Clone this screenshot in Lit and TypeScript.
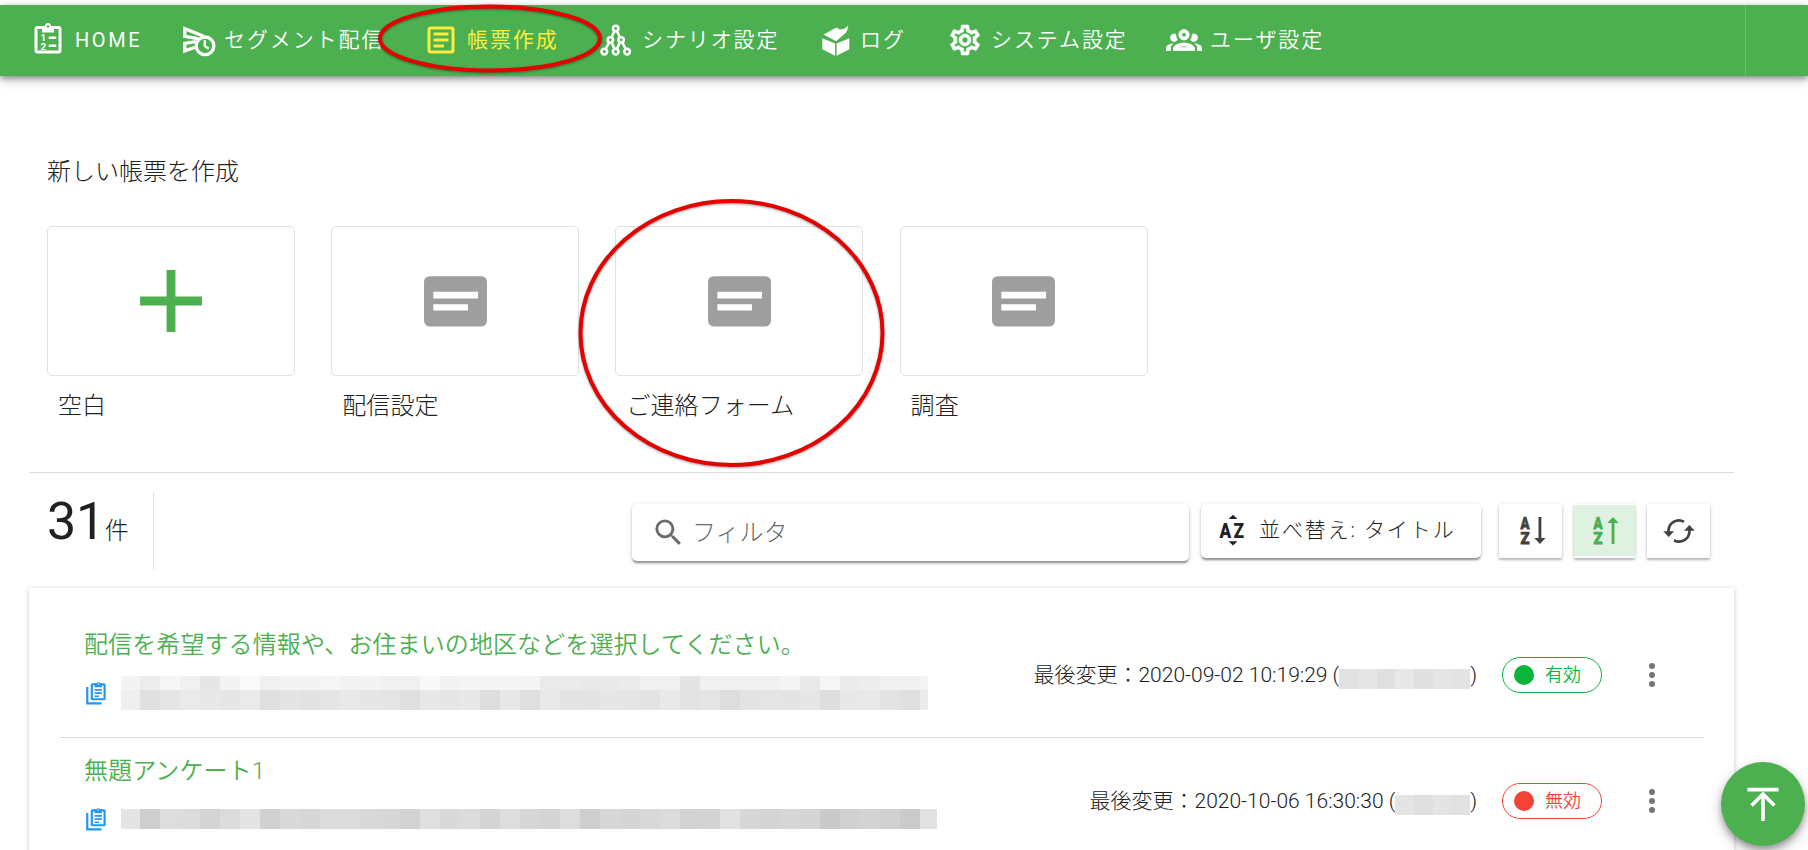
import { LitElement, html, css, svg } from "lit";
import { customElement, property } from "lit/decorators.js";

const ICONS: Record<string, unknown> = {
  home: svg`<rect x="4" y="3.700" width="16" height="16.300" rx="1" fill="none" stroke="currentColor" stroke-width="2"/><path fill="currentColor" d="M8 2.700h2a2 2 0 0 1 4 0h2V7H8z"/><circle cx="12" cy="3" r=".8" fill="#4caf50"/><path stroke="currentColor" stroke-width="1.600" d="M12.500 10.500h5M12.500 15.800h5"/><text class="digit" x="7" y="12.600">1</text><text class="digit" x="7" y="18.400">2</text>`,
  send: svg`<g fill="none" stroke="currentColor" stroke-width="2.200"><path d="M12 11.100L3.200 9.500V4.400L15.500 9.300M10.500 13.100L3.200 14.200v5L10 16.800"/><circle cx="16.700" cy="15.900" r="5.900"/><path stroke-width="1.600" d="M16.500 12.200v3.800l2.700 1.900"/></g>`,
  form: svg`<g fill="none" stroke="currentColor" stroke-width="2"><rect x="4" y="4" width="16" height="16" rx="1"/><path d="M7 8h10M7 12h10M7 16h7"/></g>`,
  scenario: svg`<g fill="none" stroke="currentColor" stroke-width="1.700"><circle cx="11.800" cy="4.300" r="1.800"/><circle cx="8.200" cy="11.900" r="1.800"/><circle cx="15.400" cy="11.900" r="1.800"/><circle cx="4.200" cy="19.700" r="1.900"/><circle cx="11.800" cy="19.700" r="1.900"/><circle cx="19.400" cy="19.700" r="1.900"/><path d="M11 6l-2.100 4.300M12.600 6l2.100 4.300M7.400 13.600l-2.300 4.400M9 13.600l2.100 4.400M14.600 13.600l-2.100 4.400M16.200 13.600l2.300 4.400"/></g>`,
  log: svg`<path fill="currentColor" d="M4.200 10.900l8.500 3.400v8.200l-8.500-4.300zM22.200 10.900l-8.500 3.400v8.200l8.500-4.300zM5 8.300l8.600-4.600 2.300 1.300c2.300 0 4.100-.8 5.600-2.900 0 2.600-.9 4.800-3 6.200l-5 4.600z"/>`,
  gear: svg`<path fill="currentColor" stroke="currentColor" stroke-width=".4" d="M12,8A4,4 0 0,1 16,12A4,4 0 0,1 12,16A4,4 0 0,1 8,12A4,4 0 0,1 12,8M12,10A2,2 0 0,0 10,12A2,2 0 0,0 12,14A2,2 0 0,0 14,12A2,2 0 0,0 12,10M10,22C9.75,22 9.54,21.82 9.5,21.58L9.13,18.93C8.5,18.68 7.96,18.34 7.44,17.94L4.95,18.95C4.73,19.03 4.46,18.95 4.34,18.73L2.34,15.27C2.21,15.05 2.27,14.78 2.46,14.63L4.57,12.97L4.5,12L4.57,11L2.46,9.37C2.27,9.22 2.21,8.95 2.34,8.73L4.34,5.27C4.46,5.05 4.73,4.96 4.95,5.05L7.44,6.05C7.96,5.66 8.5,5.32 9.13,5.07L9.5,2.42C9.54,2.18 9.75,2 10,2H14C14.25,2 14.46,2.18 14.5,2.42L14.87,5.07C15.5,5.32 16.04,5.66 16.56,6.05L19.05,5.05C19.27,4.96 19.54,5.05 19.66,5.27L21.66,8.73C21.79,8.95 21.73,9.22 21.54,9.37L19.43,11L19.5,12L19.43,13L21.54,14.63C21.73,14.78 21.79,15.05 21.66,15.27L19.66,18.73C19.54,18.95 19.27,19.04 19.05,18.95L16.56,17.95C16.04,18.34 15.5,18.68 14.87,18.93L14.5,21.58C14.46,21.82 14.25,22 14,22H10M11.25,4L10.88,6.61C9.68,6.86 8.62,7.5 7.85,8.39L5.44,7.35L4.69,8.65L6.8,10.2C6.4,11.37 6.4,12.64 6.8,13.8L4.68,15.36L5.43,16.66L7.86,15.62C8.63,16.5 9.68,17.14 10.87,17.38L11.24,20H12.76L13.13,17.39C14.32,17.14 15.37,16.5 16.14,15.62L18.57,16.66L19.32,15.36L17.2,13.81C17.6,12.64 17.6,11.37 17.2,10.2L19.31,8.65L18.56,7.35L16.15,8.39C15.38,7.5 14.32,6.86 13.12,6.62L12.75,4H11.25Z"/>`,
  users: svg`<path fill="currentColor" stroke="currentColor" stroke-width=".5" d="M12,5A3.5,3.5 0 0,0 8.5,8.5A3.5,3.5 0 0,0 12,12A3.5,3.5 0 0,0 15.5,8.5A3.5,3.5 0 0,0 12,5M12,7A1.5,1.5 0 0,1 13.5,8.5A1.5,1.5 0 0,1 12,10A1.5,1.5 0 0,1 10.5,8.5A1.5,1.5 0 0,1 12,7M5.5,8A2.5,2.5 0 0,0 3,10.5C3,11.44 3.53,12.25 4.29,12.68C4.65,12.88 5.06,13 5.5,13C5.94,13 6.35,12.88 6.71,12.68C7.08,12.47 7.39,12.17 7.62,11.81C6.89,10.86 6.5,9.7 6.5,8.5C6.5,8.41 6.5,8.31 6.5,8.22C6.2,8.08 5.86,8 5.5,8M18.5,8C18.14,8 17.8,8.08 17.5,8.22C17.5,8.31 17.5,8.41 17.5,8.5C17.5,9.7 17.11,10.86 16.38,11.81C16.5,12 16.63,12.15 16.78,12.3C16.94,12.45 17.1,12.58 17.29,12.68C17.65,12.88 18.06,13 18.5,13C18.94,13 19.35,12.88 19.71,12.68C20.47,12.25 21,11.44 21,10.5A2.5,2.5 0 0,0 18.5,8M12,14C9.66,14 5,15.17 5,17.5V19H19V17.5C19,15.17 14.34,14 12,14M4.71,14.55C2.78,14.78 0,15.76 0,17.5V19H3V17.07C3,16.06 3.69,15.22 4.71,14.55M19.29,14.55C20.31,15.22 21,16.06 21,17.07V19H24V17.5C24,15.76 21.22,14.78 19.29,14.55M12,16C13.53,16 15.24,16.5 16.23,17H7.77C8.76,16.5 10.47,16 12,16Z"/>`,
  plus: svg`<path fill="currentColor" d="M11 5h2v6h6v2h-6v6h-2v-6H5v-2h6z"/>`,
  note: svg`<path fill="currentColor" fill-rule="evenodd" d="M4.500 4.700h15a1.600 1.600 0 0 1 1.600 1.600v11.300a1.600 1.600 0 0 1-1.600 1.600h-15a1.600 1.600 0 0 1-1.600-1.600V6.300a1.600 1.600 0 0 1 1.600-1.600zM5.600 9.200v1.900h12.900V9.200zM5.600 12.800v1.800h10v-1.800z"/>`,
  magnify: svg`<path fill="currentColor" d="M9.5,3A6.5,6.5 0 0,1 16,9.5C16,11.11 15.41,12.59 14.44,13.73L14.71,14H15.5L20.5,19L19,20.5L14,15.5V14.71L13.73,14.44C12.59,15.41 11.11,16 9.5,16A6.5,6.5 0 0,1 3,9.5A6.5,6.5 0 0,1 9.5,3M9.5,5C7,5 5,7 5,9.5C5,12 7,14 9.5,14C12,14 14,12 14,9.5C14,7 12,5 9.5,5Z"/>`,
  az: svg`<path fill="currentColor" d="M12 1.900l2.900 2.800H9.100zM12 22.300l2.900-2.800H9.100z"/><text class="az" x="3" y="17" textLength="18" lengthAdjust="spacingAndGlyphs">AZ</text>`,
  sortDown: svg`<text class="sort" x="5" y="10.600" textLength="6" lengthAdjust="spacingAndGlyphs">A</text><text class="sort" x="5" y="20.700" textLength="6" lengthAdjust="spacingAndGlyphs">Z</text><path fill="currentColor" d="M17 2.600h1.900v14.100h2.800l-3.750 4-3.750-4H17z"/>`,
  sortUp: svg`<text class="sort" x="4.400" y="10.600" textLength="6" lengthAdjust="spacingAndGlyphs">A</text><text class="sort" x="4.400" y="20.700" textLength="6" lengthAdjust="spacingAndGlyphs">Z</text><path fill="currentColor" d="M16.400 20.700h1.900V6.600h2.800l-3.750-4-3.750 4h2.800z"/>`,
  refresh: svg`<g fill="none" stroke="currentColor" stroke-width="1.800"><path d="M5 13v-1a7 7 0 0 1 10.300-6.200M19 11v1a7 7 0 0 1-10.300 6.200"/></g><path fill="currentColor" d="M1.500 12.200h7.200L5.100 16zM22.500 11.800h-7.200L18.900 8z"/>`,
  copy: svg`<g fill="none" stroke="currentColor" stroke-width="2"><rect x="7.200" y="4" width="11.800" height="13.800" rx=".6"/><path d="M3 6.500v15h13.200"/><path stroke-width="1.600" d="M9.800 9.200h6.700M9.800 12.200h6.700M9.800 15h4"/></g><path fill="currentColor" d="M9.800 3.300h1.700a1.700 1.700 0 0 1 3.300 0h1.700v3.500H9.800z"/><circle cx="13.150" cy="3.700" r=".7" fill="#fff"/>`,
  dots: svg`<g fill="currentColor"><circle cx="12" cy="6" r="2"/><circle cx="12" cy="12" r="2"/><circle cx="12" cy="18" r="2"/></g>`,
  top: svg`<path fill="currentColor" d="M3.500 3.200h17v2h-17zM13 9v12.300h-2V9l-4.500 4.500-1.420-1.420L12 5.160l6.920 6.920-1.420 1.420z"/>`,
};

@customElement("ui-icon")
export class UiIcon extends LitElement {
  @property() name = "";
  @property({ type: Number }) size = 36;
  static styles = css`
    :host { display: block; flex: none; line-height: 0; }
    .digit { font: 700 6.500px Roboto, sans-serif; fill: currentColor; }
    .az { font: 900 13.500px Roboto, sans-serif; fill: currentColor; }
    .sort { font: 900 11.300px Roboto, sans-serif; fill: currentColor; stroke: currentColor; stroke-width: .5px; }
  `;
  render() {
    return html`<svg width=${this.size} height=${this.size} viewBox="0 0 24 24">${ICONS[this.name]}</svg>`;
  }
}

const NAV = [
  ["home", "HOME"], ["send", "セグメント配信"], ["form", "帳票作成"], ["scenario", "シナリオ設定"],
  ["log", "ログ"], ["gear", "システム設定"], ["users", "ユーザ設定"],
];
const TEMPLATES = [["plus", "空白"], ["note", "配信設定"], ["note", "ご連絡フォーム"], ["note", "調査"]];

interface Survey {
  title: string;
  date: string;
  active: boolean;
  mosaic: string[];
  owner: string;
}
// Every two hex digits are the grey level of one redaction block.
const SURVEYS: Survey[] = [
  {
    title: "配信を希望する情報や、お住まいの地区などを選択してください。",
    date: "2020-09-02 10:19:29", active: true,
    mosaic: [
      "f3ecf6f0e6f3f9f0f3f3f6f2f3f0f0f8f2f4f4f4f5eaebe9e9ebf0f0e4f1f0f1f0f4e9f6ebedf1f1f5",
      "efe0e5eae8e6eae0e4e2e5e9e6e5e0e8e6e8dde7dfe9e4e3e6e5e3e9e3e5dde3e5e4e6dee8e9e3dfeb",
    ],
    owner: "e1e6dfe8e0e5e3",
  },
  {
    title: "無題アンケート1", date: "2020-10-06 16:30:30", active: false,
    mosaic: ["e4cedddcd4dbe4d1d9d6dbdbd8d7d2dfd9dcd4ddd6d4ddced7d5d8dcd2d3e2d7d4d6d5cad1d3d1cbe2"],
    owner: "e4e0e4e1",
  },
];
const greys = (s: string) => (s.match(/../g) ?? []).map((v) => `#${v}${v}${v}`);

@customElement("app-root")
export class AppRoot extends LitElement {
  static styles = css`
    :host { display: block; position: relative; height: 850px; overflow: hidden; background: #fff; color: #212121;
      font-family: Roboto, "Noto Sans CJK JP", sans-serif; font-weight: 300; font-size: 24px; line-height: 30px; white-space: nowrap; }
    * { box-sizing: border-box; }
    .bar { display: grid; grid-template-columns: 150px 243px 175px 218px 131px 219px 1fr 63px; margin-top: 5px; height: 71px; padding-left: 30px;
      background: #4caf50; color: #fff; box-shadow: 0 2px 5px rgba(0,0,0,.3), 0 4px 10px rgba(0,0,0,.25); }
    .item { display: flex; align-items: center; gap: 8px; font-size: 21px; font-weight: 350; letter-spacing: 1.900px; padding-bottom: 2px; }
    .label { padding-top: 1px; }
    .latin { font-size: 20px; font-weight: 400; letter-spacing: 2.600px; padding-left: 1px; }
    .current { color: #ffeb3b; font-weight: 400; }
    .rest { border-left: 1px solid rgba(255,255,255,.2); }
    .new { padding: 81px 0 51px 47px; }
    .cards { display: flex; gap: 36.200px; margin-top: 39px; }
    .tile { width: 248px; height: 150px; border: 1px solid #e0e0e0; border-radius: 5px; display: flex; align-items: center; justify-content: center; }
    .plus { color: #4caf50; }
    .note { color: #9e9e9e; }
    .name { margin: 15px 0 0 11px; letter-spacing: .1px; }
    .tools { display: flex; align-items: flex-start; margin-left: 29px; width: 1705px; height: 116px; border-top: 1px solid #dcdcdc; padding: 19px 24px 0 18px; }
    .count { width: 107px; height: 78px; border-right: 1px solid #e0e0e0; line-height: 60px; }
    .num { font-size: 52px; font-weight: 400; letter-spacing: -.3px; }
    .box { display: flex; align-items: center; margin-top: 12px; background: #fff; border-radius: 5px;
      box-shadow: 0 3px 2px -1px rgba(0,0,0,.28), 0 2px 3px rgba(0,0,0,.18), 0 1px 6px rgba(0,0,0,.1); }
    .filter { width: 557px; height: 57px; margin-left: 478px; padding: 0 0 1px 19px; color: #6b6b6b; gap: 6px; }
    .sort { width: 280px; height: 54px; margin-left: 12px; padding: 0 0 2px 14px; gap: 8px; font-size: 21px; letter-spacing: 1.900px; }
    .btn { width: 63px; height: 54px; margin-left: 12px; border-radius: 1px; justify-content: center; color: #424242; box-shadow: 0 2px 2px rgba(0,0,0,.22), 0 1px 5px rgba(0,0,0,.14); }
    .first { margin-left: 18px; }
    .on { width: 61px; background: #dff1e1; color: #4caf50; border-top: 1px solid #fff; border-bottom: 2px solid #fff; }
    .list { margin-left: 29px; width: 1705px; height: 290px; padding: 0 30px 0 31px; box-shadow: 0 1px 5px rgba(0,0,0,.22); }
    .row { display: flex; height: 126px; padding-left: 24px; }
    .row:first-child { height: 150px; padding-top: 24px; border-bottom: 1px solid #dcdcdc; }
    .main { flex: 1; }
    .title { color: #4caf50; margin-top: 18px; letter-spacing: .1px; font-weight: 350; }
    .sub { display: flex; align-items: center; margin-top: 17px; height: 32px; color: #2196f3; gap: 11px; }
    .mosaic { display: flex; flex-direction: column; }
    .line { display: flex; height: 20px; }
    .tall .line:first-child { height: 14px; }
    .cell { width: 20px; }
    .cell:first-child { width: 19px; }
    .cell:last-child { width: 17px; }
    .tall .cell:last-child { width: 8px; }
    .meta { display: flex; align-items: center; height: 36px; margin-top: 45px; font-size: 21px; }
    .date { font-size: 21px; }
    .owner { display: flex; height: 20px; margin-top: 7px; }
    .own { width: 18.700px; }
    .chip { display: flex; align-items: center; gap: 11px; width: 100px; height: 36px; margin: 0 32px 0 25px; padding: 0 0 0 11px; border: 1px solid; border-radius: 18px;
      font-size: 18px; font-weight: 350; color: #f44336; }
    .ok { color: #0bb53c; }
    .dot { width: 20px; height: 20px; border-radius: 50%; background: currentColor; }
    .more { color: #757575; margin-right: 34px; }
    .fab { position: absolute; left: 1721px; top: 762px; width: 84px; height: 84px; border-radius: 50%; background: #4caf50; color: #fff; display: flex; align-items: center; justify-content: center;
      box-shadow: 0 4px 6px rgba(0,0,0,.3), 0 6px 16px rgba(0,0,0,.18); }
    .marks { position: absolute; inset: 0; pointer-events: none; filter: drop-shadow(0 1px 1px rgba(0,0,0,.4)); }
  `;

  private row(s: Survey) {
    return html`<div class="row">
      <div class="main">
        <div class="title">${s.title}</div>
        <div class="sub"><ui-icon name="copy" size="26"></ui-icon>
          <div class="mosaic ${s.mosaic.length > 1 ? "tall" : ""}">
            ${s.mosaic.map((l) => html`<div class="line">${greys(l).map((c) => html`<span class="cell" style="background:${c}"></span>`)}</div>`)}
          </div>
        </div>
      </div>
      <div class="meta">
        <span>最後変更：</span><span class="date">${s.date} (</span>
        <span class="owner">${greys(s.owner).map((c) => html`<span class="own" style="background:${c}"></span>`)}</span><span class="date">)</span>
        <span class="chip ${s.active ? "ok" : ""}"><span class="dot"></span>${s.active ? "有効" : "無効"}</span>
        <ui-icon class="more" name="dots" size="36"></ui-icon>
      </div>
    </div>`;
  }

  render() {
    return html`
      <nav class="bar">
        ${NAV.map(([icon, label]) => html`<a class="item ${icon === "form" ? "current" : ""}"><ui-icon name=${icon}></ui-icon><span class="label ${icon === "home" ? "latin" : ""}">${label}</span></a>`)}
        <span class="rest"></span>
      </nav>
      <section class="new">
        <div>新しい帳票を作成</div>
        <div class="cards">
          ${TEMPLATES.map(([icon, label]) => html`<div><div class="tile ${icon}"><ui-icon name=${icon} size=${icon === "plus" ? 106 : 83}></ui-icon></div><div class="name">${label}</div></div>`)}
        </div>
      </section>
      <section class="tools">
        <div class="count"><span class="num">31</span>件</div>
        <div class="box filter"><ui-icon name="magnify" size="35"></ui-icon><span class="label">フィルタ</span></div>
        <div class="box sort"><ui-icon name="az" size="36"></ui-icon>並べ替え: タイトル</div>
        <div class="box btn first"><ui-icon name="sortDown" size="36"></ui-icon></div>
        <div class="box btn on"><ui-icon name="sortUp" size="36"></ui-icon></div>
        <div class="box btn"><ui-icon name="refresh" size="36"></ui-icon></div>
      </section>
      <section class="list">${SURVEYS.map((s) => this.row(s))}</section>
      <div class="fab"><ui-icon name="top" size="44"></ui-icon></div>
      <svg class="marks" width="1808" height="850" fill="none" stroke="#e60000" stroke-width="4">
        <ellipse cx="490" cy="38.500" rx="110" ry="32"/><ellipse cx="731.500" cy="333" rx="151" ry="132"/>
      </svg>`;
  }
}
